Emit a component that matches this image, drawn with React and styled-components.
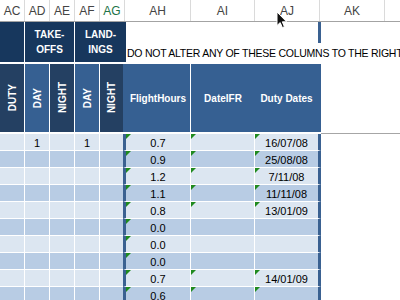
import React from 'react';
import styled, { createGlobalStyle } from 'styled-components';

const navy = '#17375d';
const dark = '#244062';
const blue = '#366092';
const edge = '#3a6191';
const light = '#dce6f1';
const mid = '#b8cce4';
const tick = '#1f8a1f';

const GlobalStyle = createGlobalStyle`
    html, body {
        margin: 0;
        padding: 0;
        background: #fff;
    }
    body {
        font-family: "Liberation Sans", Arial, sans-serif;
    }
`

const Sheet = styled.div`
    position: relative;
    width: 400px;
    height: 300px;
    overflow: hidden;
    background: #fff;
`

const LetterBar = styled.div`
    display: flex;
    height: 21px;
    border-bottom: 1px solid #a3a3a3;
`

const Letter = styled.div`
    flex: 0 0 ${props => props.w}px;
    box-sizing: border-box;
    border-right: 1px solid #dadada;
    display: flex;
    align-items: center;
    justify-content: center;
    font-size: 12px;
    color: ${props => props.active ? '#217346' : '#444'};
`

const GroupRow = styled.div`
    display: flex;
    height: 40px;
    margin-bottom: 2px;
`

const GroupCell = styled.div`
    flex: 0 0 ${props => props.w}px;
    box-sizing: border-box;
    background: ${navy};
    border-right: ${props => props.sep ? '1px solid #fff' : 'none'};
    display: flex;
    align-items: center;
    justify-content: center;
    text-align: center;
    color: #fff;
    font-weight: bold;
    font-size: 10px;
    line-height: 15px;
`

const NoticeArea = styled.div`
    flex: 1;
    min-width: 0;
    display: flex;
    flex-direction: column;
`

const NoticeStrip = styled.div`
    height: 21px;
    display: flex;
`

const EdgeMark = styled.div`
    margin-left: 192px;
    width: 3px;
    background: ${edge};
`

const Notice = styled.div`
    height: 19px;
    padding-left: 1px;
    display: flex;
    align-items: center;
    white-space: nowrap;
    font-size: 10.5px;
    letter-spacing: -0.25px;
    color: #000;
`

const HeadRow = styled.div`
    display: flex;
    height: 70px;
`

const VertHead = styled.div`
    flex: 0 0 ${props => props.w}px;
    box-sizing: border-box;
    background: ${props => props.shade === 'blue' ? blue : dark};
    background-clip: padding-box;
    border-right: ${props => props.sep ? '1px solid #fff' : 'none'};
    border-bottom: 2px solid #fff;
    display: flex;
    align-items: center;
    justify-content: center;
`

const VertText = styled.span`
    writing-mode: vertical-rl;
    transform: rotate(180deg);
    color: #fff;
    font-weight: bold;
    font-size: 10px;
`

const TitleHead = styled.div`
    flex: 0 0 ${props => props.w}px;
    box-sizing: border-box;
    background: ${blue};
    border-right: ${props => props.sep ? '1px solid #fff' : 'none'};
    border-bottom: 2px solid #fff;
    padding-left: ${props => props.padL || 0}px;
    padding-right: ${props => props.padR || 0}px;
    display: flex;
    align-items: center;
    justify-content: center;
    color: #fff;
    font-weight: bold;
    font-size: 10px;
    white-space: nowrap;
`

const HeadRest = styled.div`
    flex: 1;
    border-bottom: 1px solid #a6a6a6;
`

const DataRow = styled.div`
    display: flex;
    height: 17px;
`

const DataCell = styled.div`
    position: relative;
    flex: 0 0 ${props => props.w}px;
    box-sizing: border-box;
    background: ${props => props.alt ? mid : light};
    border-bottom: 1px solid #fff;
    border-right: ${props => props.edgeR ? `3px solid ${edge}` : props.sep ? '1px solid #fff' : 'none'};
    border-left: ${props => props.edgeL ? `3px solid ${edge}` : 'none'};
    display: flex;
    align-items: center;
    justify-content: center;
    padding-top: 1px;
    font-size: 11px;
    color: #000;
`

const Tick = styled.span`
    position: absolute;
    top: 0;
    left: 0;
    width: 0;
    height: 0;
    border-top: 5px solid ${tick};
    border-right: 5px solid transparent;
`

const Cursor = styled.svg`
    position: absolute;
    left: 276px;
    top: 11px;
`

const letters = [
    ['AC', 25], ['AD', 25], ['AE', 25], ['AF', 25], ['AG', 25, true],
    ['AH', 66], ['AI', 64], ['AJ', 65], ['AK', 65],
]

const rows = [
    { ad: '1', af: '1', ah: '0.7', ai: true, aj: '16/07/08', ajT: true },
    { ah: '0.9', ai: true, aj: '25/08/08', ajT: true },
    { ah: '1.2', ai: true, aj: '7/11/08', ajT: true },
    { ah: '1.1', ai: true, aj: '11/11/08', ajT: true },
    { ah: '0.8', ai: true, aj: '13/01/09', ajT: true },
    { ah: '0.0' },
    { ah: '0.0' },
    { ah: '0.0' },
    { ah: '0.7', ai: true, aj: '14/01/09', ajT: true },
    { ah: '0.6', ai: true, aj: '', ajT: true },
]

const App = () => {
    return (
        <Sheet>
            <GlobalStyle />
            <LetterBar>
                {letters.map(([name, w, active]) => (
                    <Letter key={name} w={w} active={active}>{name}</Letter>
                ))}
            </LetterBar>

            <GroupRow>
                <GroupCell w={25} sep />
                <GroupCell w={50} sep>TAKE-<br />OFFS</GroupCell>
                <GroupCell w={51}>LAND-<br />INGS</GroupCell>
                <NoticeArea>
                    <NoticeStrip>
                        <EdgeMark />
                    </NoticeStrip>
                    <Notice>DO NOT ALTER ANY OF THESE COLUMNS TO THE RIGHT</Notice>
                </NoticeArea>
            </GroupRow>

            <HeadRow>
                <VertHead w={25} sep><VertText>DUTY</VertText></VertHead>
                <VertHead w={25} sep shade="blue"><VertText>DAY</VertText></VertHead>
                <VertHead w={25} sep><VertText>NIGHT</VertText></VertHead>
                <VertHead w={25} sep shade="blue"><VertText>DAY</VertText></VertHead>
                <VertHead w={23}><VertText>NIGHT</VertText></VertHead>
                <TitleHead w={68} sep padL={3}>FlightHours</TitleHead>
                <TitleHead w={64}>DateIFR</TitleHead>
                <TitleHead w={66} padR={3}>Duty Dates</TitleHead>
                <HeadRest />
            </HeadRow>

            {rows.map((r, i) => {
                const alt = i % 2 === 1
                return (
                    <DataRow key={i}>
                        <DataCell w={25} sep alt={alt} />
                        <DataCell w={25} sep alt={alt}>{r.ad}</DataCell>
                        <DataCell w={25} sep alt={alt} />
                        <DataCell w={25} sep alt={alt}>{r.af}</DataCell>
                        <DataCell w={23} alt={alt} />
                        <DataCell w={68} sep edgeL alt={alt}><Tick />{r.ah}</DataCell>
                        <DataCell w={64} sep alt={alt}>{r.ai && <Tick />}</DataCell>
                        <DataCell w={66} edgeR alt={alt}>{r.ajT && <Tick />}{r.aj}</DataCell>
                    </DataRow>
                )
            })}

            <Cursor width="12" height="18" viewBox="0 0 12 18">
                <path
                    d="M1 1 L1 14.5 L4.2 11.6 L6.4 16.6 L8.4 15.7 L6.3 10.8 L10.6 10.8 Z"
                    fill="#111"
                    stroke="#fff"
                    strokeWidth="1"
                    strokeLinejoin="round"
                />
            </Cursor>
        </Sheet>
    )
}

export default App
